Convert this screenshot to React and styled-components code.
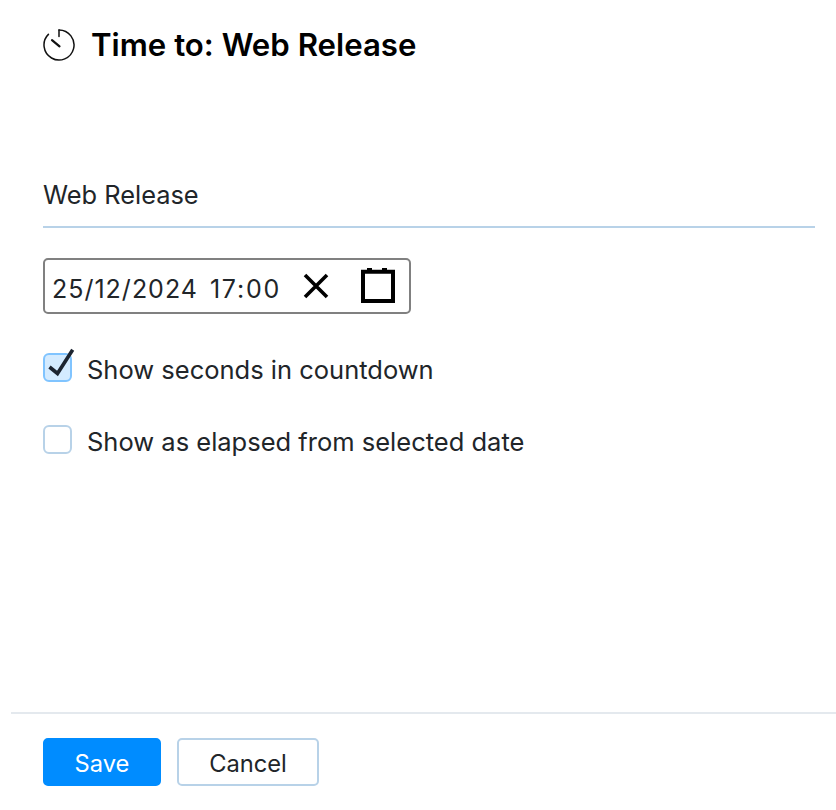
import React from "react";
import styled, { createGlobalStyle } from "styled-components";

const Global = createGlobalStyle`
  html, body { margin: 0; padding: 0; background: #fff; }
  body { font-family: Inter, "Liberation Sans", sans-serif; color: #212529; }
`;

const Page = styled.div`
  width: 836px;
  height: 810px;
  display: flex;
  flex-direction: column;
  overflow: hidden;
`;

const Header = styled.header`
  display: flex;
  align-items: center;
  gap: 15px;
  height: 34px;
  padding: 28px 43px 0;
`;

const Title = styled.h1`
  margin: 0;
  font-size: 31.2px;
  line-height: 34px;
  font-weight: 600;
  color: #000;
`;

const Body = styled.main`
  flex: 1;
  padding: 96px 21px 0 43px;
  display: flex;
  flex-direction: column;
`;

const NameInput = styled.div`
  height: 70px;
  box-sizing: border-box;
  padding-top: 22px;
  font-size: 25.4px;
  line-height: 30px;
  border-bottom: 2px solid #b8d2e8;
`;

const DateBox = styled.div`
  margin-top: 30px;
  width: 368px;
  height: 56px;
  box-sizing: border-box;
  border: 2px solid #808080;
  border-radius: 5px;
  padding: 0 14px 0 7px;
  display: flex;
  align-items: center;
  font-size: 25px;
  letter-spacing: 1px;
  white-space: pre;
`;

const DateText = styled.span`
  flex: 1;
  padding-top: 6px;
`;

const TimeText = styled.span`
  margin-left: 12px;
  letter-spacing: 1.8px;
`;

const ClearIcon = styled.svg`
  width: 26px;
  height: 26px;
  margin-right: 32px;
`;

const CalendarIcon = styled.svg`
  width: 34px;
  height: 35px;
  margin-top: -2px;
`;

const Options = styled.div`
  margin-top: 39px;
  display: flex;
  flex-direction: column;
  gap: 43px;
`;

const Option = styled.label`
  display: flex;
  align-items: center;
  gap: 15px;
  height: 29px;
  font-size: 25.5px;
  line-height: 28px;
`;

const OptionText = styled.span`
  padding-top: 5px;
`;

const Box = styled.span`
  position: relative;
  width: 29px;
  height: 29px;
  box-sizing: border-box;
  border-radius: 6px;
  border: 2px solid ${(p) => (p.$checked ? "#80c4ff" : "#b8d2e8")};
  background: ${(p) => (p.$checked ? "#d4ebff" : "#fff")};
`;

const Tick = styled.svg`
  position: absolute;
  left: 2px;
  top: -10px;
  width: 30px;
  height: 32px;
`;

const Footer = styled.footer`
  margin-left: 11px;
  height: 98px;
  box-sizing: border-box;
  border-top: 2px solid #e4e9ee;
  padding: 24px 0 0 32px;
  display: flex;
  gap: 16px;
  align-items: flex-start;
`;

const Button = styled.button`
  height: 48px;
  width: ${(p) => (p.$primary ? "118px" : "142px")};
  box-sizing: border-box;
  border-radius: 5px;
  border: 2px solid ${(p) => (p.$primary ? "#008cff" : "#b8d2e8")};
  background: ${(p) => (p.$primary ? "#008cff" : "#fff")};
  color: ${(p) => (p.$primary ? "#fff" : "#212529")};
  font-family: inherit;
  font-size: 23.7px;
  padding: 2px 0 0;
`;

export default function App() {
  return (
    <Page>
      <Global />
      <Header>
        <svg width="33" height="33" viewBox="0 0 33 33" fill="none" stroke="#111">
          <path d="M16 1 A15 15 0 1 1 5.4 5.4" strokeWidth="1.5" strokeLinecap="round" />
          <path d="M16 1 V7.5" strokeWidth="1.5" strokeLinecap="round" />
          <path d="M9 11.2 L16.5 17.4" strokeWidth="2.2" strokeLinecap="round" />
        </svg>
        <Title>Time to: Web Release</Title>
      </Header>
      <Body>
        <NameInput>Web Release</NameInput>
        <DateBox>
          <DateText>25/12/2024<TimeText>17:00</TimeText></DateText>
          <ClearIcon viewBox="0 0 26 26" fill="none" stroke="#000" strokeWidth="3.6">
            <path d="M2 2 L24 24 M24 2 L2 24" />
          </ClearIcon>
          <CalendarIcon viewBox="0 0 34 35" fill="none" stroke="#000">
            <path d="M2 3.8 H32 V33 H2 Z" strokeWidth="4" />
            <path d="M8.5 0 V3 M23.5 0 V3" strokeWidth="5" />
          </CalendarIcon>
        </DateBox>
        <Options>
          <Option>
            <Box $checked>
              <Tick viewBox="0 0 30 32" fill="none" stroke="#1c2430" strokeWidth="3.6">
                <path d="M2.5 22 L10.5 28.5 L25.7 4.7" />
              </Tick>
            </Box>
            <OptionText>Show seconds in countdown</OptionText>
          </Option>
          <Option>
            <Box />
            <OptionText>Show as elapsed from selected date</OptionText>
          </Option>
        </Options>
      </Body>
      <Footer>
        <Button $primary>Save</Button>
        <Button>Cancel</Button>
      </Footer>
    </Page>
  );
}
